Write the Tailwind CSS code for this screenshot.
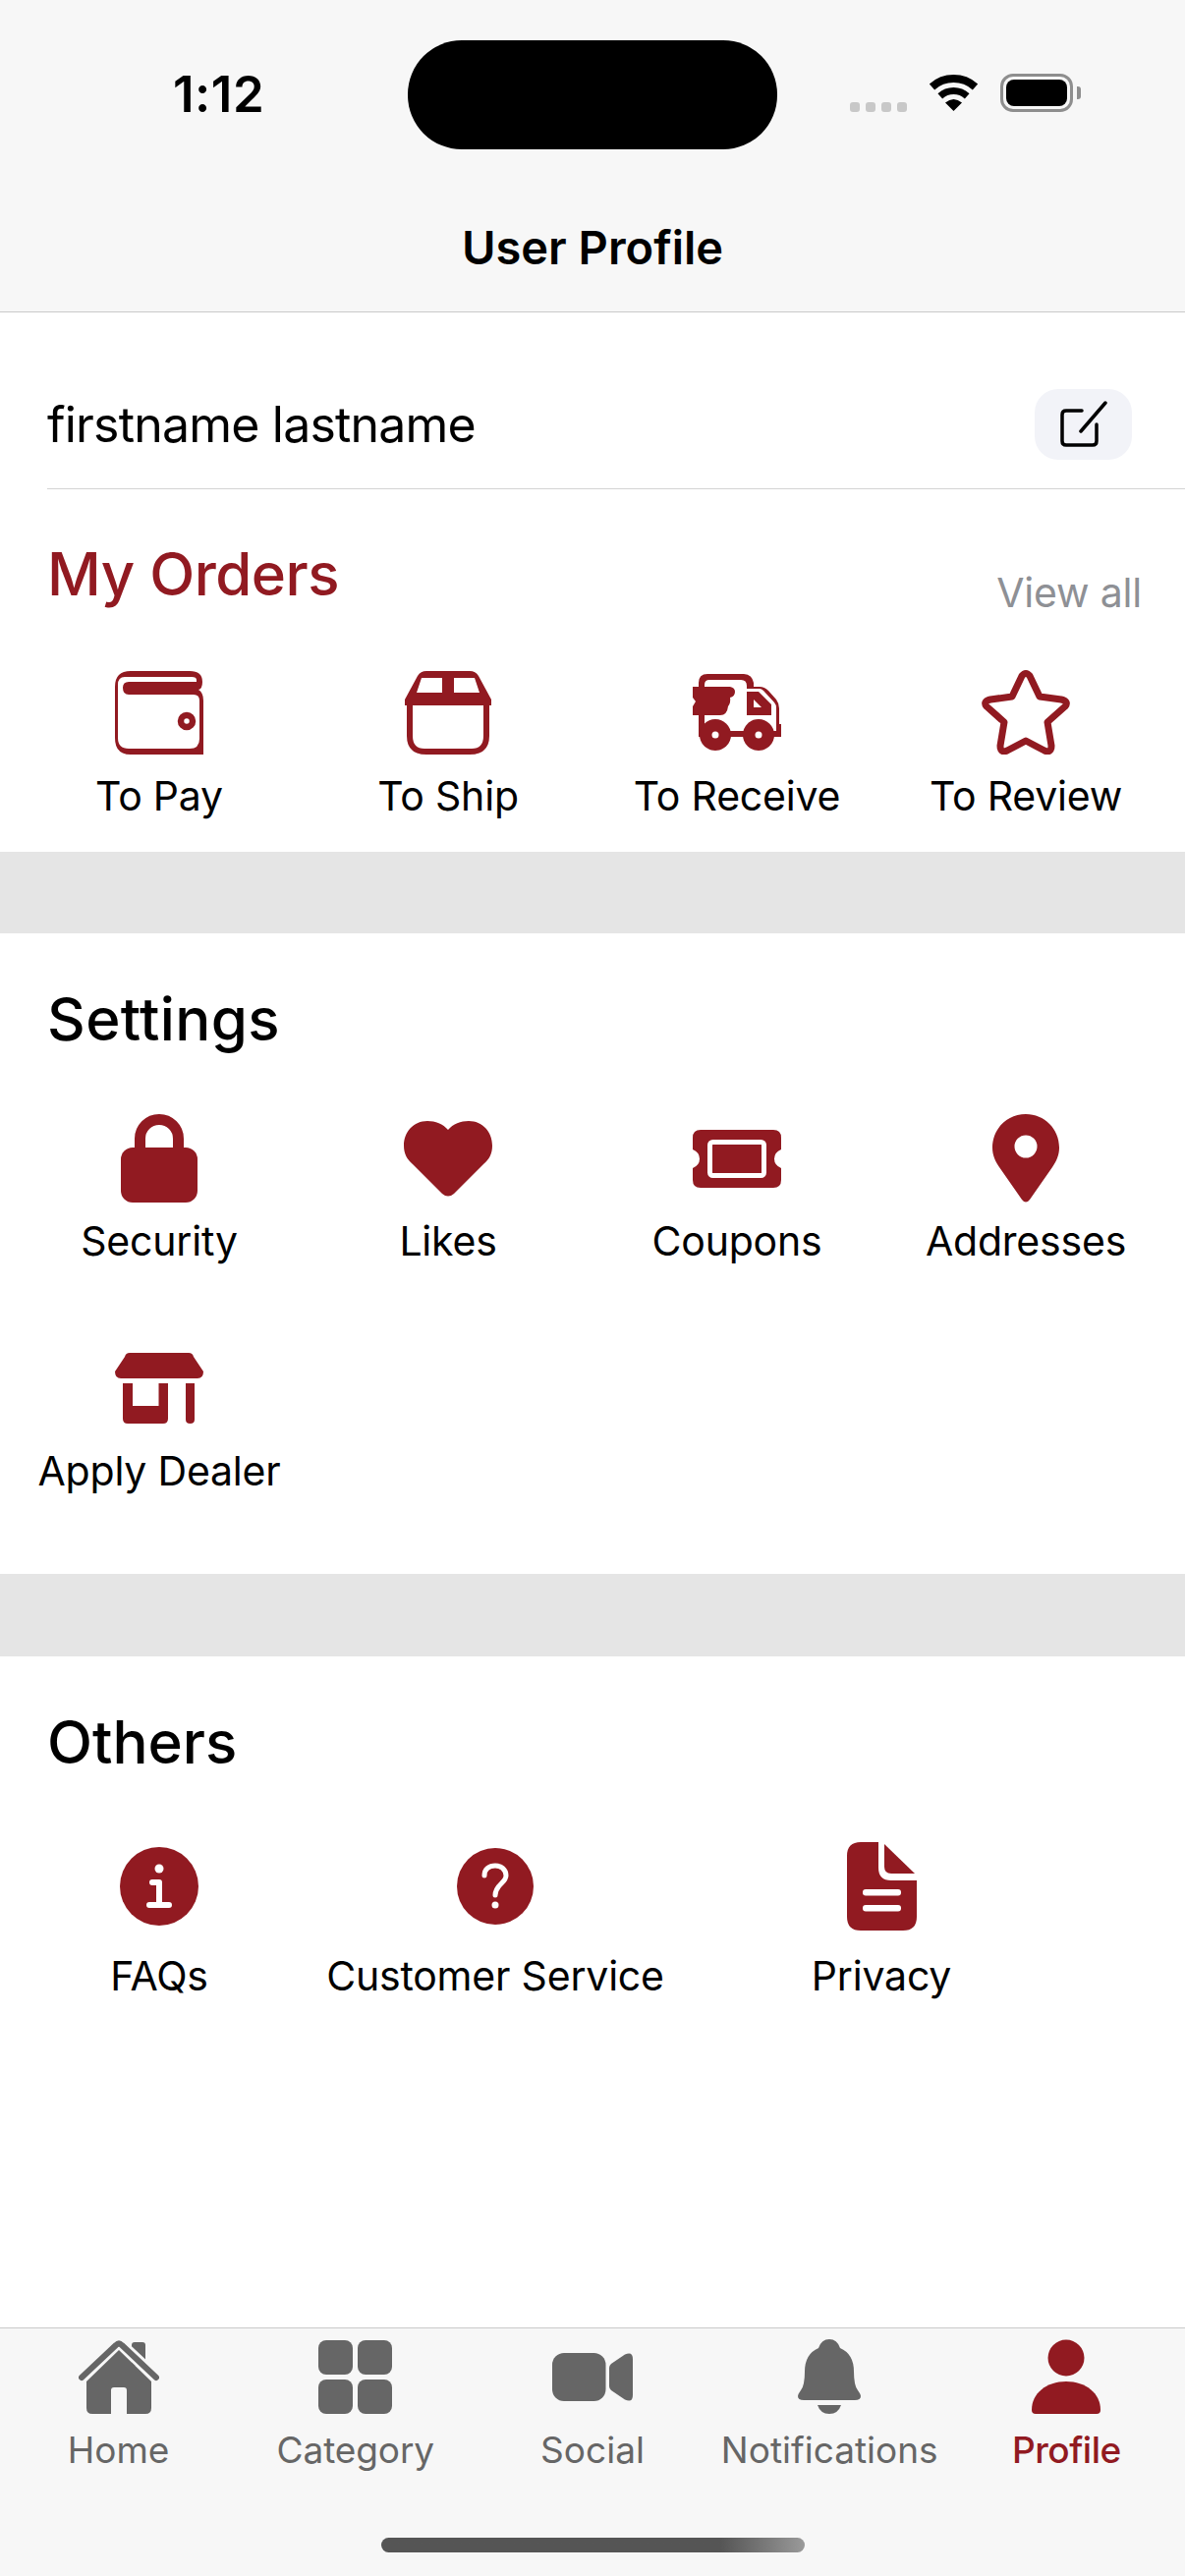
<!DOCTYPE html>
<html>
<head>
  <meta charset="utf-8">
  <meta name="viewport" content="width=device-width, initial-scale=1">
  <title>User Profile</title>
  <script src="https://cdn.jsdelivr.net/npm/@tailwindcss/browser@4"></script>
</head>
<body>
  <div class="w-[1206px] h-[2622px] flex flex-col bg-white text-black font-['Inter',sans-serif] overflow-hidden">
    <!-- Header -->
    <header class="h-[318px] shrink-0 bg-[#f7f7f7] border-b border-[#c9c9c9] flex flex-col">
      <div class="flex items-start pt-[41px] h-[152px]">
        <div class="w-[415px] pl-[176px] pt-[28px] text-[51px] leading-[54px] font-semibold tracking-[0.5px]">1:12</div>
        <div class="w-[376px] h-[111px] rounded-[55px] bg-black"></div>
        <div class="flex pl-[74px] pt-[35px]">
          <div class="flex gap-[6px] pt-[28px] mr-[22px]">
            <span class="w-[10px] h-[10px] rounded-[3px] bg-[#c8c8c8]"></span>
            <span class="w-[10px] h-[10px] rounded-[3px] bg-[#c8c8c8]"></span>
            <span class="w-[10px] h-[10px] rounded-[3px] bg-[#c8c8c8]"></span>
            <span class="w-[10px] h-[10px] rounded-[3px] bg-[#c8c8c8]"></span>
          </div>
          <svg width="51" height="37" viewBox="0 0 51 37" fill="none" class="mr-[22px]">
            <path d="M3.5 12.5A33 33 0 0 1 47.5 12.5" stroke="#000" stroke-width="8"/>
            <path d="M11.8 21.8A20.5 20.5 0 0 1 39.2 21.8" stroke="#000" stroke-width="7"/>
            <path d="M25.5 37L17 28.5Q25.5 21.5 34 28.5Z" fill="#000"/>
          </svg>
          <div class="w-[74px] h-[39px] -mt-px rounded-[13px] border-[3px] border-[#8e8e8e] p-[3px]">
            <div class="w-full h-full rounded-[8px] bg-black"></div>
          </div>
          <div class="w-[4px] h-[13px] mt-[12px] ml-[4px] rounded-r-[3px] bg-[#8e8e8e]"></div>
        </div>
      </div>
      <h1 class="text-center text-[47px] leading-[60px] font-semibold mt-[70px]">User Profile</h1>
    </header>

    <main class="flex-1">
      <!-- Name -->
      <div class="h-[180px] pt-[48px] ml-[48px] pr-[54px] border-b border-[#d4d4d4] flex items-center justify-between">
        <span class="text-[50px] leading-[60px] tracking-[-0.8px]">firstname lastname</span>
        <button class="w-[99px] h-[72px] rounded-[24px] bg-[#f2f3f8] flex items-center justify-center">
          <svg width="48" height="48" viewBox="0 0 48 48" fill="none" stroke="#000" stroke-width="3.5" stroke-linecap="round" stroke-linejoin="round">
            <path d="M22 10H6Q2 10 2 14V41Q2 45 6 45H33Q37 45 37 41V24"/>
            <path d="M21 31L46 2"/>
          </svg>
        </button>
      </div>

      <!-- My Orders -->
      <section class="pt-[51px] pb-[32px]">
        <div class="h-[131px] pl-[48px] pr-[44px] flex items-start justify-between">
          <h2 class="text-[60px] leading-[70px] font-medium text-[#911a21] tracking-[-0.5px]">My Orders</h2>
          <span class="mt-[29px] text-[41px] leading-[50px] tracking-[-0.2px] text-[#8e9095]">View all</span>
        </div>
        <div class="px-[15px] grid grid-cols-4">
          <div class="flex flex-col items-center">
            <div class="h-[90px] flex items-center justify-center">
              <svg width="90" height="85" viewBox="0 0 90 85">
                <path fill="#911a21" d="M16 0H76Q89 0 89 11Q89 18 85 19Q90 22 90 30V85H16Q0 85 0 68V16Q0 0 16 0Z"/>
                <path fill="#fff" d="M10 6H78Q83 6 83 9V11H14Q8 11 8 17Q8 24 14 24H80Q86 24 86 30V69Q86 79 76 79H14Q3 79 3 68V14Q3 6 10 6Z"/>
                <circle cx="73" cy="51" r="6" fill="#fff" stroke="#911a21" stroke-width="6.5"/>
              </svg>
            </div>
            <span class="mt-[15px] text-[41px] leading-[50px] tracking-[-0.2px]">To Pay</span>
          </div>
          <div class="flex flex-col items-center">
            <div class="h-[90px] flex items-center justify-center">
              <svg width="88" height="85" viewBox="0 0 88 85">
                <path fill="#911a21" d="M22 0H66Q72 0 75 5L88 29V35H86V66Q86 85 66 85H22Q2 85 2 66V35H0V29L13 5Q16 0 22 0Z"/>
                <path fill="#fff" d="M17 7H38V22H12Z"/>
                <path fill="#fff" d="M50 7H71L76 22H50Z"/>
                <path fill="#fff" d="M8 35H80V66Q80 79 68 79H20Q8 79 8 66Z"/>
              </svg>
            </div>
            <span class="mt-[15px] text-[41px] leading-[50px] tracking-[-0.2px]">To Ship</span>
          </div>
          <div class="flex flex-col items-center">
            <div class="h-[90px] flex items-center justify-center">
              <svg width="90" height="78" viewBox="0 0 90 78">
                <path fill="#911a21" d="M6 60V9Q6 0 15 0H52Q60 0 62 9V13H68Q73 13 77 17L85 26Q88 30 88 35V51H90V64H6Z"/>
                <path fill="#fff" d="M12 60V11Q12 6 17 6H49Q55 6 55 12V15H68Q70 15 72 17L83 29Q85 31 85 35V58H12Z"/>
                <path fill="#911a21" d="M55 18H67L80 31V42H55Z"/>
                <path fill="#fff" d="M62 26L70 34H62Z"/>
                <path fill="#911a21" d="M0 13H38Q43 14 43 18Q43 23 38 24Q39 29 36 33Q35 42 28 42H0V33L3 28L0 24Z"/>
                <circle cx="23" cy="62" r="16" fill="#911a21"/>
                <circle cx="67" cy="62" r="16" fill="#911a21"/>
                <circle cx="23" cy="62" r="3.5" fill="#fff"/>
                <circle cx="67" cy="62" r="3.5" fill="#fff"/>
              </svg>
            </div>
            <span class="mt-[15px] text-[41px] leading-[50px] tracking-[-0.2px]">To Receive</span>
          </div>
          <div class="flex flex-col items-center">
            <div class="h-[90px] flex items-center justify-center">
              <svg width="90" height="86" viewBox="0 0 90 86" fill="none" stroke="#911a21" stroke-width="7" stroke-linejoin="round">
                <path d="M41 6Q45 1 49 6L59 27L81 30Q89 32 85 37L67 53L71 77Q71 85 64 82L45 72L26 82Q19 85 19 77L23 53L5 37Q1 32 9 30L31 27Z"/>
              </svg>
            </div>
            <span class="mt-[15px] text-[41px] leading-[50px] tracking-[-0.2px]">To Review</span>
          </div>
        </div>
      </section>

      <div class="h-[83px] bg-[#e5e5e5]"></div>

      <!-- Settings -->
      <section class="h-[652px] pt-[52px]">
        <h2 class="pl-[48px] mb-[62px] text-[60px] leading-[70px] font-medium tracking-[0.4px]">Settings</h2>
        <div class="px-[15px] grid grid-cols-4 gap-y-[80px]">
          <div class="flex flex-col items-center">
            <div class="h-[90px] flex items-center justify-center">
              <svg width="78" height="90" viewBox="0 0 78 90">
                <path d="M19.5 36V25a19.5 19.5 0 0 1 39 0V36" fill="none" stroke="#911a21" stroke-width="11"/>
                <rect y="34" width="78" height="56" rx="12" fill="#911a21"/>
              </svg>
            </div>
            <span class="mt-[14px] text-[41px] leading-[50px] tracking-[-0.2px]">Security</span>
          </div>
          <div class="flex flex-col items-center">
            <div class="h-[90px] flex items-center justify-center">
              <svg width="90" height="77" viewBox="0 0 90 77">
                <path fill="#911a21" d="M45 9C40 3 32 0 24 0C10 0 0 11 0 25C0 33 3 39 9 44L39 74Q45 79 51 74L81 44C87 39 90 33 90 25C90 11 80 0 66 0C58 0 50 3 45 9Z"/>
              </svg>
            </div>
            <span class="mt-[14px] text-[41px] leading-[50px] tracking-[-0.2px]">Likes</span>
          </div>
          <div class="flex flex-col items-center">
            <div class="h-[90px] flex items-center justify-center">
              <svg width="90" height="59" viewBox="0 0 90 59">
                <path fill="#911a21" d="M8 0H82Q90 0 90 8V20Q83 23 83 29.5Q83 36 90 39V51Q90 59 82 59H8Q0 59 0 51V39Q7 36 7 29.5Q7 23 0 20V8Q0 0 8 0Z"/>
                <rect x="17.5" y="12.5" width="55" height="34" rx="3" fill="#911a21" stroke="#fff" stroke-width="5"/>
              </svg>
            </div>
            <span class="mt-[14px] text-[41px] leading-[50px] tracking-[-0.2px]">Coupons</span>
          </div>
          <div class="flex flex-col items-center">
            <div class="h-[90px] flex items-center justify-center">
              <svg width="68" height="90" viewBox="0 0 68 90">
                <path fill="#911a21" fill-rule="evenodd" d="M34 0C15 0 0 15 0 34C0 42 3 48 7 54L30 87Q34 92 38 87L61 54C65 48 68 42 68 34C68 15 53 0 34 0ZM34 21.500a11.500 11.500 0 1 1 0 23a11.500 11.500 0 1 1 0-23Z"/>
              </svg>
            </div>
            <span class="mt-[14px] text-[41px] leading-[50px] tracking-[-0.2px]">Addresses</span>
          </div>
          <div class="flex flex-col items-center">
            <div class="h-[90px] flex items-center justify-center">
              <svg width="90" height="72" viewBox="0 0 90 72">
                <path fill="#911a21" d="M15 0H75Q79 0 80 4L90 19Q90 26 84 26H6Q0 26 0 19L10 4Q11 0 15 0Z"/>
                <path fill="#911a21" d="M8 31H18V54H44.500V31H54V67Q54 72 49 72H13Q8 72 8 67Z"/>
                <path fill="#911a21" d="M72 31H81V68Q81 72 76.500 72Q72 72 72 68Z"/>
              </svg>
            </div>
            <span class="mt-[14px] text-[41px] leading-[50px] tracking-[-0.2px] whitespace-nowrap">Apply Dealer</span>
          </div>
        </div>
      </section>

      <div class="h-[84px] bg-[#e5e5e5]"></div>

      <!-- Others -->
      <section class="pt-[52px]">
        <h2 class="pl-[48px] mb-[67px] text-[60px] leading-[70px] font-medium">Others</h2>
        <div class="pl-[15px] flex">
          <div class="w-[294px] flex flex-col items-center">
            <div class="h-[90px] flex items-center justify-center">
              <svg width="80" height="80" viewBox="0 0 80 80">
                <circle cx="40" cy="40" r="40" fill="#911a21"/>
                <circle cx="40" cy="22" r="4.500" fill="#fff"/>
                <path d="M33 36H40V58M30 59H50" fill="none" stroke="#fff" stroke-width="6" stroke-linecap="round" stroke-linejoin="round"/>
              </svg>
            </div>
            <span class="mt-[21px] text-[41px] leading-[50px] tracking-[-0.2px]">FAQs</span>
          </div>
          <div class="w-[390px] flex flex-col items-center">
            <div class="h-[90px] flex items-center justify-center">
              <svg width="78" height="78" viewBox="0 0 78 78">
                <circle cx="39" cy="39" r="39" fill="#911a21"/>
                <path d="M28 28C28 21 33 18 39 18C45 18 50 22 50 28C50 36 39 37 39 48" fill="none" stroke="#fff" stroke-width="5" stroke-linecap="round"/>
                <circle cx="39" cy="58" r="3.500" fill="#fff"/>
              </svg>
            </div>
            <span class="mt-[21px] text-[41px] leading-[50px] tracking-[-0.2px]">Customer Service</span>
          </div>
          <div class="w-[396px] flex flex-col items-center">
            <div class="h-[90px] flex items-center justify-center">
              <svg width="71" height="90" viewBox="0 0 71 90">
                <path fill="#911a21" d="M14 0H32V26Q32 39 45 39H71V76Q71 90 57 90H14Q0 90 0 76V14Q0 0 14 0Z"/>
                <path fill="#911a21" d="M38 2L69 32H45Q38 32 38 25Z"/>
                <rect x="16" y="48" width="39" height="6.500" rx="3" fill="#fff"/>
                <rect x="16" y="64" width="39" height="6.500" rx="3" fill="#fff"/>
              </svg>
            </div>
            <span class="mt-[21px] text-[41px] leading-[50px] tracking-[-0.2px]">Privacy</span>
          </div>
        </div>
      </section>
    </main>

    <!-- Tab bar -->
    <nav class="h-[253px] shrink-0 bg-[#f7f7f7] border-t border-[#c9c9c9] flex flex-col items-center pt-[11px] text-[#666666]">
      <div class="w-full grid grid-cols-5">
        <div class="flex flex-col items-center">
          <div class="h-[76px] flex items-center justify-center">
            <svg width="82" height="76" viewBox="0 0 82 76">
              <rect x="54" y="3" width="14" height="24" rx="3" fill="#666666"/>
              <path d="M3 39L38 6Q41 3 44 6L79 39" fill="none" stroke="#f7f7f7" stroke-width="12" stroke-linecap="round"/>
              <path d="M3 39L38 6Q41 3 44 6L79 39" fill="none" stroke="#666666" stroke-width="6" stroke-linecap="round"/>
              <path fill="#666666" d="M41 11L74 43V70Q74 76 68 76H49V52Q49 49 46 49H36Q33 49 33 52V76H14Q8 76 8 70V43Z"/>
            </svg>
          </div>
          <span class="mt-[15px] text-[37px] leading-[44px]">Home</span>
        </div>
        <div class="flex flex-col items-center">
          <div class="h-[76px] flex items-center justify-center">
            <div class="grid grid-cols-2 gap-[5px]">
              <span class="w-[35px] h-[35px] rounded-[8px] bg-[#666666]"></span>
              <span class="w-[35px] h-[35px] rounded-[8px] bg-[#666666]"></span>
              <span class="w-[35px] h-[35px] rounded-[8px] bg-[#666666]"></span>
              <span class="w-[35px] h-[35px] rounded-[8px] bg-[#666666]"></span>
            </div>
          </div>
          <span class="mt-[15px] text-[37px] leading-[44px] tracking-[-0.1px]">Category</span>
        </div>
        <div class="flex flex-col items-center">
          <div class="h-[76px] flex items-center justify-center">
            <svg width="82" height="49" viewBox="0 0 82 49">
              <rect width="54.500" height="49" rx="12" fill="#666666"/>
              <path fill="#666666" d="M58 15Q58 13 60 11L74 1.500Q82 -2 82 6V43Q82 51 74 47.500L60 38Q58 36 58 34Z"/>
            </svg>
          </div>
          <span class="mt-[15px] text-[37px] leading-[44px]">Social</span>
        </div>
        <div class="flex flex-col items-center">
          <div class="h-[76px] flex items-center justify-center">
            <svg width="64" height="76" viewBox="0 0 64 76">
              <path fill="#666666" d="M32 0Q40 0 43 9Q57 15 57 33Q57 47 61 52Q64 56 64 58Q64 62 58 62H6Q0 62 0 58Q0 56 3 52Q7 47 7 33Q7 15 21 9Q24 0 32 0Z"/>
              <path fill="#666666" d="M20 67H44Q41 76 32 76Q23 76 20 67Z"/>
            </svg>
          </div>
          <span class="mt-[15px] text-[37px] leading-[44px]">Notifications</span>
        </div>
        <div class="flex flex-col items-center text-[#911a21]">
          <div class="h-[76px] flex items-center justify-center">
            <svg width="70" height="76" viewBox="0 0 70 76">
              <circle cx="35" cy="19" r="18.500" fill="#911a21"/>
              <path fill="#911a21" d="M0 72C0 55 15 43 35 43C55 43 70 55 70 72Q70 76 66 76H4Q0 76 0 72Z"/>
            </svg>
          </div>
          <span class="mt-[15px] text-[37px] leading-[44px] font-medium tracking-[-0.5px]">Profile</span>
        </div>
      </div>
      <div class="mt-[67px] w-[431px] h-[15px] rounded-full bg-linear-to-r from-[#555555] via-[#555555] via-80% to-[#9a9a9a]"></div>
    </nav>
  </div>
</body>
</html>
